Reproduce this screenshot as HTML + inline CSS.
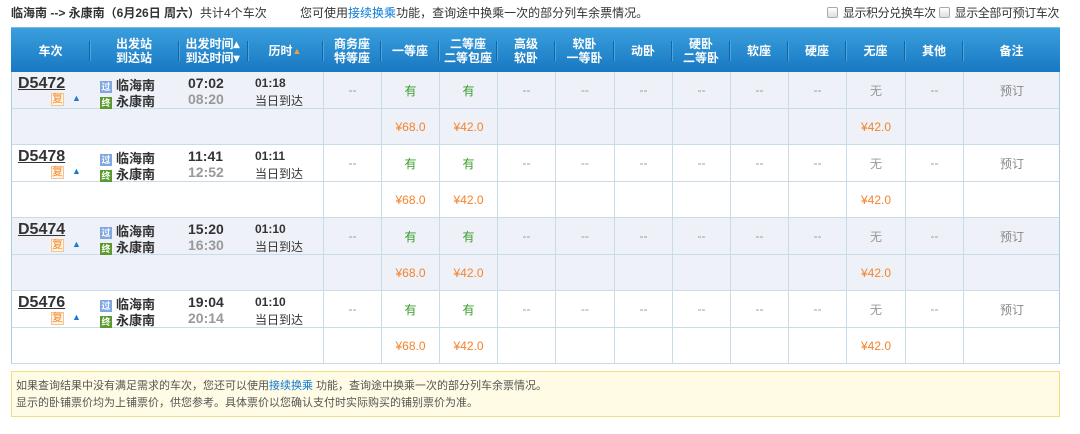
<!DOCTYPE html>
<html><head><meta charset="utf-8"><style>
*{margin:0;padding:0;box-sizing:border-box}
body{width:1080px;height:434px;background:#fff;font-family:"Liberation Sans","Noto Sans CJK SC",sans-serif;font-size:12px;color:#333;position:relative;overflow:hidden}
.a{position:absolute}
.top{top:4px;left:11px;font-size:12px;white-space:nowrap}
.top b{font-weight:bold;color:#333}
a{color:#0a7ad6;text-decoration:none}
.cb{display:inline-block;width:11px;height:11px;border:1px solid #aaa;border-radius:2px;background:linear-gradient(#fff,#ddd);vertical-align:-1px;margin-right:5px}
.hd{left:11px;top:27px;width:1049px;height:45px;background:linear-gradient(#3a9fdd,#1878c2);border-top:1px solid #7bbbe6}
.h{position:absolute;top:0;height:45px;display:flex;align-items:center;justify-content:center;text-align:center;color:#fff;font-weight:bold;font-size:12px;line-height:14px}
.sep{position:absolute;top:13px;width:2px;height:20px;background:#1565a5;border-right:1px solid #4aa6e0}
.row{position:absolute;left:11px;width:1049px;border-bottom:1px solid #c9dbe7;border-left:1px solid #a8cbe6;border-right:1px solid #a8cbe6}
.c{position:absolute;top:0;bottom:0;border-left:1px solid #c9dbe7;display:flex;align-items:center;justify-content:center;color:#999}
.g{color:#3a9c2a}.o{color:#f5832b}
.tn{position:absolute;left:6px;top:3px;font-size:16px;font-weight:bold;color:#333;text-decoration:underline;font-family:"Liberation Sans",sans-serif}
.fu{position:absolute;left:39px;top:21px;width:13px;height:13px;border:1px solid #fbc38c;background:#fff6e9;color:#f08a2a;font-size:11px;line-height:11px;text-align:center}
.up{position:absolute;left:60px;top:21px;color:#1a7ad0;font-size:9px}
.st{position:absolute;left:88px;font-size:13px;font-weight:bold;color:#333}
.ic{display:inline-block;width:12px;height:12px;font-size:9px;line-height:12px;text-align:center;color:#fff;margin-right:4px;vertical-align:0}
.tm{position:absolute;left:176px;font-size:14px;font-weight:bold;font-family:"Liberation Sans",sans-serif}
.du{position:absolute;left:243px;font-size:12px}
.note{left:11px;top:371px;width:1049px;height:46px;background:#fffbe5;border:1px solid #f3dc82;font-size:11px;color:#555;padding:6px 0 0 4px;line-height:17px}
</style></head><body>
<div class="a top"><b>临海南 --&gt; 永康南（6月26日 周六）</b>共计4个车次 &nbsp; &nbsp; &nbsp; &nbsp; &nbsp;您可使用<a>接续换乘</a>功能，查询途中换乘一次的部分列车余票情况。</div>
<div class="a" style="top:4px;right:21px;white-space:nowrap;letter-spacing:-0.4px"><span class="cb"></span>显示积分兑换车次 <span class="cb"></span>显示全部可预订车次</div>
<div class="a hd">
<div class="h" style="left:0;width:79px">车次</div><div class="sep" style="left:78px"></div>
<div class="h" style="left:79px;width:88px">出发站<br>到达站</div><div class="sep" style="left:167px"></div>
<div class="h" style="left:167px;width:69px">出发时间▴<br>到达时间▾</div><div class="sep" style="left:236px"></div>
<div class="h" style="left:236px;width:76px">历时<span style="color:#f5a03a;font-size:9px">▲</span></div><div class="sep" style="left:311px"></div>
<div class="h" style="left:312px;width:58px">商务座<br>特等座</div><div class="sep" style="left:369px"></div>
<div class="h" style="left:370px;width:58px">一等座</div><div class="sep" style="left:427px"></div>
<div class="h" style="left:428px;width:58px">二等座<br>二等包座</div><div class="sep" style="left:485px"></div>
<div class="h" style="left:486px;width:58px">高级<br>软卧</div><div class="sep" style="left:543px"></div>
<div class="h" style="left:544px;width:59px">软卧<br>一等卧</div><div class="sep" style="left:602px"></div>
<div class="h" style="left:603px;width:58px">动卧</div><div class="sep" style="left:660px"></div>
<div class="h" style="left:661px;width:58px">硬卧<br>二等卧</div><div class="sep" style="left:718px"></div>
<div class="h" style="left:719px;width:58px">软座</div><div class="sep" style="left:776px"></div>
<div class="h" style="left:777px;width:58px">硬座</div><div class="sep" style="left:834px"></div>
<div class="h" style="left:835px;width:59px">无座</div><div class="sep" style="left:893px"></div>
<div class="h" style="left:894px;width:58px">其他</div><div class="sep" style="left:951px"></div>
<div class="h" style="left:952px;width:97px">备注</div>
</div>
<div id="rows"></div>
<div class="a note">如果查询结果中没有满足需求的车次，您还可以使用<a>接续换乘</a> 功能，查询途中换乘一次的部分列车余票情况。<br>显示的卧铺票价均为上铺票价，供您参考。具体票价以您确认支付时实际购买的铺别票价为准。</div>
<script>
var T=[["D5472","07:02","08:20","01:18"],["D5478","11:41","12:52","01:11"],["D5474","15:20","16:30","01:10"],["D5476","19:04","20:14","01:10"]];
var L=[311,369,427,485,543,602,660,718,776,834,893,951,1048];
var h="";
T.forEach(function(t,i){
 var y=72+i*73,bg=i%2==0?"#eef1f8":"#fff";
 h+='<div class="row" style="top:'+y+'px;height:37px;background:'+bg+'">';
 h+='<div class="tn">'+t[0]+'</div><div class="fu">复</div><div class="up">▲</div>';
 h+='<div class="st" style="top:3px"><span class="ic" style="background:#7fa7e0">过</span>临海南</div>';
 h+='<div class="st" style="top:19px"><span class="ic" style="background:#5b9a2e">终</span>永康南</div>';
 h+='<div class="tm" style="top:3px;color:#333">'+t[1]+'</div><div class="tm" style="top:19px;color:#999">'+t[2]+'</div>';
 h+='<div class="du" style="top:4px;font-weight:bold">'+t[3]+'</div><div class="du" style="top:20px">当日到达</div>';
 var v=["--","有","有","--","--","--","--","--","--","无","--","预订"];
 for(var k=0;k<12;k++){var cl=(k==1||k==2)?' g':'';h+='<div class="c'+cl+'" style="left:'+L[k]+'px;width:'+(L[k+1]-L[k])+'px;'+(k==11?'color:#888':'')+'">'+v[k]+'</div>';}
 h+='</div>';
 h+='<div class="row" style="top:'+(y+37)+'px;height:36px;background:'+bg+'">';
 for(var k=0;k<12;k++){var tx=k==1?'¥68.0':(k==2||k==9)?'¥42.0':'';h+='<div class="c o" style="left:'+L[k]+'px;width:'+(L[k+1]-L[k])+'px">'+tx+'</div>';}
 h+='</div>';
});
document.getElementById("rows").innerHTML=h;
</script>
</body></html>
